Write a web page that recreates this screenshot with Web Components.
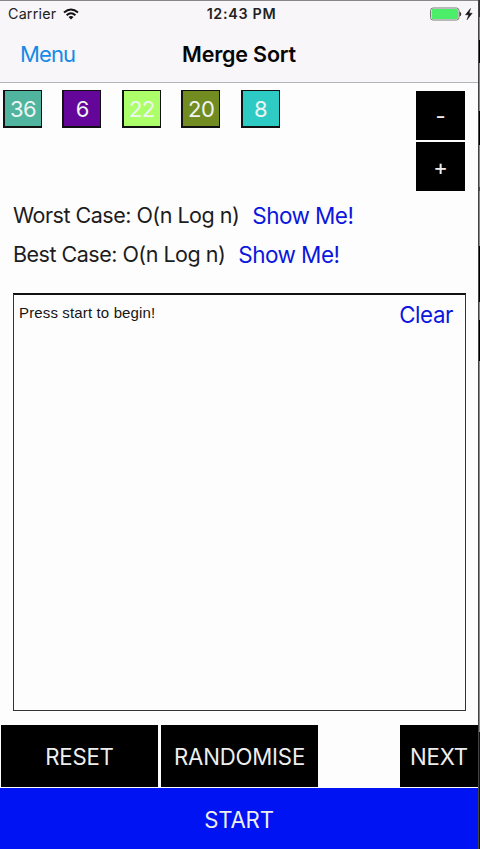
<!DOCTYPE html>
<html lang="en"><head><meta charset="utf-8"><title>Merge Sort</title>
<style>html,body{margin:0;height:100%;overflow:hidden;background:#fefdfe}</style></head><body>
<sort-screen></sort-screen>
<script>
const define=(name,html)=>customElements.define(name,class extends HTMLElement{
  constructor(){super();const t=document.createElement('template');t.innerHTML=html;
    this.attachShadow({mode:'open'}).append(t.content.cloneNode(true));}
});
define('status-bar',`<style>
:host{display:grid;grid-template-columns:1fr auto 1fr;align-items:center;height:26px;padding:0 3px 0 8px;font-size:14.3px;line-height:26px;color:#222}
.l{display:flex;gap:7px;align-items:center;letter-spacing:.2px}.c{font-weight:600;letter-spacing:.7px}.r{display:flex;justify-content:flex-end;align-items:center}
svg{display:block}</style>
<div class="l"><span>Carrier</span><svg width="16" height="12" viewBox="0 0 16 12" fill="none" stroke="#111" stroke-width="2"><path d="M1 4.6Q8-1.7 15 4.6M3.6 7.3Q8 3.3 12.4 7.3"/><path d="M5.5 9Q8 6.9 10.5 9L8 11.6Z" fill="#111" stroke="none"/></svg></div>
<div class="c">12:43 PM</div>
<div class="r"><svg width="45" height="14" viewBox="0 0 45 14"><rect x=".5" y="1" width="28.5" height="12" rx="2.5" fill="#fff" stroke="#777"/><rect x="1.5" y="2" width="26.5" height="10" rx="1" fill="#4bee68"/><path d="M29.5 4.2q3.6 2.8 0 5.6z" fill="#333"/><path d="M40.5 1.5L35.5 7.8H38.8L37 12.8L42.2 6.2H39Z" fill="#111" stroke="#111" stroke-width=".5"/></svg></div>`);
define('nav-bar',`<style>
:host{display:grid;grid-template-columns:1fr auto 1fr;align-items:center;box-sizing:border-box;height:56px;padding:0 20px 1px 20px;font-size:21.5px;border-bottom:1px solid #b5b4b7}
.m{color:#168ae6;letter-spacing:-.9px;font-size:22px}.t{font-weight:600;color:#060606;letter-spacing:-.2px}</style><span class="m"><slot name="back"></slot></span><span class="t"><slot></slot></span><span></span>`);
define('number-tile',`<style>:host{display:flex;box-sizing:border-box;width:39px;height:38px;border:1px solid #111;border-right-width:1px;border-bottom-width:2px;border-left-width:2px;background:var(--fill);color:#eef4f2;font-size:22px;letter-spacing:-.6px;align-items:center;justify-content:center}</style><slot></slot>`);
define('action-button',`<style>:host{display:flex;box-sizing:border-box;background:#000;color:#eee;font-size:22.2px;letter-spacing:-.2px;align-items:center;justify-content:center}</style><slot></slot>`);
define('case-row',`<style>:host{display:flex;gap:13px;align-items:center;height:39px;font-size:21.5px;letter-spacing:-.5px;color:#1c1c1c}.a{color:#0b17dd;font-size:22.5px;letter-spacing:-.55px;padding-top:1px}</style><span><slot></slot></span><span class="a"><slot name="link"></slot></span>`);
define('log-panel',`<style>:host{display:flex;box-sizing:border-box;justify-content:space-between;border:1px solid #333;border-top:2px solid #111;width:453px;height:418px;padding:7px 12px 0 5px}
.p{font:15px/22px "Liberation Sans",Arial,sans-serif;color:#151515;letter-spacing:.14px}.c{font-size:22.3px;line-height:26px;letter-spacing:-.4px;color:#0b17dd}</style><span class="p"><slot></slot></span><span class="c"><slot name="clear"></slot></span>`);
define('sort-screen',`<style>
:host{display:grid;grid-template-columns:478px 2px;height:849px;font-family:Inter,"Liberation Sans",sans-serif}
.app{display:flex;flex-direction:column;height:849px}
header{background:#f8f6f9;border-top:1px solid #8b858c}
.top{display:flex;justify-content:space-between;padding:7px 13px 0 3px;height:106px;box-sizing:border-box}
.tiles{display:flex;gap:20.4px}
.step{display:flex;flex-direction:column;gap:2px;width:49px;padding-top:.5px}.step action-button{flex:none;height:49px}
.cases{padding:6px 0 0 13px;box-sizing:border-box;height:104px}
.log{padding:0 0 0 13px;box-sizing:border-box;height:432px}
.actions{display:flex;height:62px;gap:3px;padding-left:1px;margin-bottom:1px}
.actions :nth-child(1){width:157px}.actions :nth-child(2){width:157px}.actions :nth-child(3){width:78px;margin-left:auto}
.start{flex:1;padding-top:1px;background:#0013f2}
.edge{border-left:1px solid #444;background:linear-gradient(#333 0 17px,#888 17px 40px,#000 40px 63px,#888 63px 111px,#000 111px 145px,#888 145px 187px,#a02050 187px 191px,#888 191px 246px,#000 246px 302px,#888 302px 320px,#000 320px 361px,#888 361px 732px,#111 732px)}
</style>
<div class="app"><header><status-bar></status-bar><nav-bar><span slot="back">Menu</span>Merge Sort</nav-bar></header>
<div class="top"><div class="tiles"><number-tile style="--fill:#50b49f">36</number-tile><number-tile style="--fill:#65069a">6</number-tile><number-tile style="--fill:#acff68">22</number-tile><number-tile style="--fill:#728c22">20</number-tile><number-tile style="--fill:#2dcbc4">8</number-tile></div>
<div class="step"><action-button>-</action-button><action-button>+</action-button></div></div>
<div class="cases"><case-row>Worst Case: O(n Log n)<span slot="link">Show Me!</span></case-row><case-row>Best Case: O(n Log n)<span slot="link">Show Me!</span></case-row></div>
<div class="log"><log-panel>Press start to begin!<span slot="clear">Clear</span></log-panel></div>
<div class="actions"><action-button>RESET</action-button><action-button>RANDOMISE</action-button><action-button>NEXT</action-button></div>
<action-button class="start">START</action-button></div><div class="edge"></div>`);
</script></body></html>
